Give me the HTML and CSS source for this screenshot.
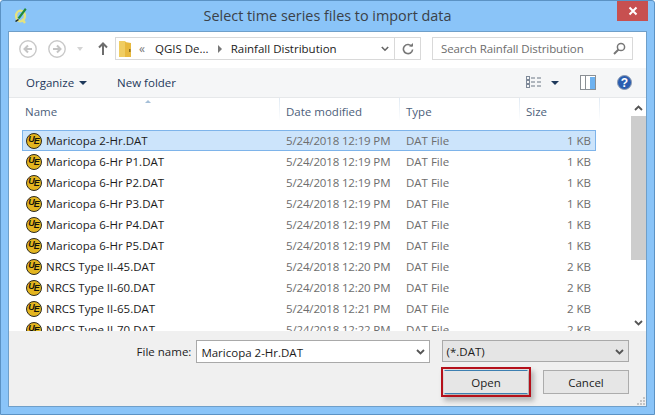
FILE: index.html
```html
<!DOCTYPE html>
<html lang="en">
<head>
    <meta charset="UTF-8">
    <title>Select time series files to import data</title>
    <link rel="stylesheet" href="styles.css">
</head>
<body>
    <div class="window">
        <div class="titlebar">
            <svg class="app-icon" width="16" height="20" viewBox="0 0 16 20">
                <ellipse cx="7.5" cy="10" rx="4.4" ry="5.4" fill="none" stroke="#e4e27e" stroke-width="2.4"/>
                <path d="M9 13l3 4" stroke="#e4e27e" stroke-width="2.4"/>
                <path d="M4.5 12L12 2l1.6 1.4L6.5 13z" fill="#1f8a3a"/>
                <path d="M2 15l3-2 1 1-3 2z" fill="#1d2a1d"/>
            </svg>
            <div class="title">Select time series files to import data</div>
            <div class="close">
                <svg width="10" height="10" viewBox="0 0 10 10"><path d="M1.5 1.5l7 7M8.5 1.5l-7 7" stroke="#fff" stroke-width="2"/></svg>
            </div>
        </div>

        <div class="inner">
            <div class="nav">
                <div class="round-btn"><svg width="18" height="18" viewBox="0 0 18 18"><circle cx="9" cy="9" r="8.2" fill="#fff" stroke="#c9c9c9" stroke-width="1.4"/><path d="M13 9H6M9 5.5L5.5 9 9 12.5" fill="none" stroke="#c4c4c4" stroke-width="2"/></svg></div>
                <div class="round-btn second"><svg width="18" height="18" viewBox="0 0 18 18"><circle cx="9" cy="9" r="8.2" fill="#fff" stroke="#c9c9c9" stroke-width="1.4"/><path d="M5 9h7M9 5.5L12.5 9 9 12.5" fill="none" stroke="#c4c4c4" stroke-width="2"/></svg></div>
                <div class="caret-light"></div>
                <svg class="up" width="10" height="13" viewBox="0 0 10 13"><path d="M5 13V2M1 5.5L5 1.5l4 4" fill="none" stroke="#6d6d6d" stroke-width="2"/></svg>
                <div class="address">
                    <svg class="folder" width="13" height="18" viewBox="0 0 13 18"><path d="M0 1h6l1 1v15H0z" fill="#f0cd62"/><path d="M6 2l6 1v14H6z" fill="#e8b93e"/><rect x="10" y="9" width="1.5" height="3" fill="#8a6d1c"/></svg>
                    <span class="chevrons">&#171;</span>
                    <span class="crumb">QGIS De...</span>
                    <span class="crumb-arrow"></span>
                    <span class="crumb">Rainfall Distribution</span>
                    <svg class="addr-down" width="8" height="6" viewBox="0 0 8 6"><path d="M.8 1l3.2 3.2L7.2 1" fill="none" stroke="#666" stroke-width="1.6"/></svg>
                    <div class="refresh"><svg width="12" height="12" viewBox="0 0 12 12"><path d="M9.8 3.4A4.6 4.6 0 1 0 10.6 6.5" fill="none" stroke="#777" stroke-width="1.6"/><path d="M7 3.6h4V0z" fill="#777"/></svg></div>
                </div>
                <div class="search">
                    <span>Search Rainfall Distribution</span>
                    <svg width="13" height="13" viewBox="0 0 13 13"><circle cx="8" cy="5" r="3.6" fill="none" stroke="#777" stroke-width="1.5"/><path d="M5.5 7.5L1 12" stroke="#777" stroke-width="2"/></svg>
                </div>
            </div>

            <div class="toolbar">
                <span class="tool">Organize</span>
                <span class="caret-dark organize-caret"></span>
                <span class="tool new-folder">New folder</span>
                <svg class="view-icon" width="15" height="13" viewBox="0 0 15 13">
                    <g fill="none" stroke="#7f8a99"><rect x=".5" y=".5" width="3" height="3"/><rect x=".5" y="4.5" width="3" height="3"/><rect x=".5" y="8.5" width="3" height="3"/></g>
                    <path d="M5 2h4M11 2h4M5 6h4M11 6h4M5 10h4M11 10h4" stroke="#6b7684"/>
                </svg>
                <span class="caret-dark view-caret"></span>
                <svg class="pane-icon" width="16" height="15" viewBox="0 0 16 15">
                    <rect x=".5" y=".5" width="15" height="14" fill="#fff" stroke="#8a8f94"/>
                    <path d="M5.5 1v13" stroke="#8a8f94"/>
                    <rect x="10" y="2" width="5" height="12" fill="#6db2f0"/>
                </svg>
                <svg class="help-icon" width="15" height="15" viewBox="0 0 15 15">
                    <circle cx="7.5" cy="7.5" r="7" fill="#2a5db0" stroke="#8d9bb0"/>
                    <text x="7.5" y="11.5" class="help-text">?</text>
                </svg>
            </div>

            <div class="browser">
                <div class="files">
                    <div class="header">
                        <span class="sort-caret"></span>
                        <div class="col-name">Name</div>
                        <div class="col-date">Date modified</div>
                        <div class="col-type">Type</div>
                        <div class="col-size">Size</div>
                    </div>
                    <div class="rows">
                        <div class="row selected"><span class="ue-icon"><i>U</i><b>E</b></span><span class="name">Maricopa 2-Hr.DAT</span><span class="date">5/24/2018 12:19 PM</span><span class="type">DAT File</span><span class="size">1 KB</span></div>
                        <div class="row"><span class="ue-icon"><i>U</i><b>E</b></span><span class="name">Maricopa 6-Hr P1.DAT</span><span class="date">5/24/2018 12:19 PM</span><span class="type">DAT File</span><span class="size">1 KB</span></div>
                        <div class="row"><span class="ue-icon"><i>U</i><b>E</b></span><span class="name">Maricopa 6-Hr P2.DAT</span><span class="date">5/24/2018 12:19 PM</span><span class="type">DAT File</span><span class="size">1 KB</span></div>
                        <div class="row"><span class="ue-icon"><i>U</i><b>E</b></span><span class="name">Maricopa 6-Hr P3.DAT</span><span class="date">5/24/2018 12:19 PM</span><span class="type">DAT File</span><span class="size">1 KB</span></div>
                        <div class="row"><span class="ue-icon"><i>U</i><b>E</b></span><span class="name">Maricopa 6-Hr P4.DAT</span><span class="date">5/24/2018 12:19 PM</span><span class="type">DAT File</span><span class="size">1 KB</span></div>
                        <div class="row"><span class="ue-icon"><i>U</i><b>E</b></span><span class="name">Maricopa 6-Hr P5.DAT</span><span class="date">5/24/2018 12:19 PM</span><span class="type">DAT File</span><span class="size">1 KB</span></div>
                        <div class="row"><span class="ue-icon"><i>U</i><b>E</b></span><span class="name">NRCS Type II-45.DAT</span><span class="date">5/24/2018 12:20 PM</span><span class="type">DAT File</span><span class="size">2 KB</span></div>
                        <div class="row"><span class="ue-icon"><i>U</i><b>E</b></span><span class="name">NRCS Type II-60.DAT</span><span class="date">5/24/2018 12:20 PM</span><span class="type">DAT File</span><span class="size">2 KB</span></div>
                        <div class="row"><span class="ue-icon"><i>U</i><b>E</b></span><span class="name">NRCS Type II-65.DAT</span><span class="date">5/24/2018 12:21 PM</span><span class="type">DAT File</span><span class="size">2 KB</span></div>
                        <div class="row"><span class="ue-icon"><i>U</i><b>E</b></span><span class="name">NRCS Type II-70.DAT</span><span class="date">5/24/2018 12:22 PM</span><span class="type">DAT File</span><span class="size">2 KB</span></div>
                    </div>
                </div>
                <div class="scrollbar">
                    <svg width="9" height="6" viewBox="0 0 9 6"><path d="M1 5l3.5-3.5L8 5" fill="none" stroke="#555" stroke-width="1.8"/></svg>
                    <div class="thumb"></div>
                    <svg width="9" height="6" viewBox="0 0 9 6"><path d="M1 1l3.5 3.5L8 1" fill="none" stroke="#555" stroke-width="1.8"/></svg>
                </div>
            </div>

            <div class="footer">
                <div class="file-line">
                    <label class="file-label">File name:</label>
                    <div class="combo file-input">Maricopa 2-Hr.DAT<svg width="9" height="6" viewBox="0 0 9 6"><path d="M1 1l3.5 3.5L8 1" fill="none" stroke="#555" stroke-width="1.8"/></svg></div>
                    <div class="combo filter">(*.DAT)<svg width="9" height="6" viewBox="0 0 9 6"><path d="M1 1l3.5 3.5L8 1" fill="none" stroke="#555" stroke-width="1.8"/></svg></div>
                </div>
                <div class="buttons">
                    <button class="btn open">Open</button>
                    <button class="btn cancel">Cancel</button>
                </div>
                <svg class="grip" width="8" height="8" viewBox="0 0 8 8"><path d="M6 0h2v2H6zM3 3h2v2H3zM6 3h2v2H6zM0 6h2v2H0zM3 6h2v2H3zM6 6h2v2H6z" fill="#c4c4c4"/></svg>
            </div>
        </div>
    </div>
</body>
</html>
```

FILE: styles.css
```css
* {
    box-sizing: border-box;
}
html, body {
    margin: 0;
    background: #fff;
}
body {
    font-family: "Open Sans", "Noto Sans", Arial, sans-serif;
    font-size: 11.5px;
    color: #1c1c1c;
}
.help-text {
    font-family: "Liberation Sans", sans-serif;
    font-size: 12px;
    font-weight: bold;
    fill: #fff;
    text-anchor: middle;
}
.window {
    width: 655px;
    height: 415px;
    display: flex;
    flex-direction: column;
    padding: 0 7px 7px 7px;
    background: #8ac4f8;
    border: 1px solid #5b92c4;
    border-radius: 3px 3px 0 0;
    overflow: hidden;
}
.titlebar {
    height: 30px;
    flex: none;
    display: flex;
    align-items: flex-start;
}
.app-icon {
    margin: 5px 0 0 5px;
    flex: none;
}
.title {
    flex: 1;
    padding: 5px 0 0 9px;
    text-align: center;
    font-size: 14.4px;
    color: #3a4148;
}
.close {
    width: 31px;
    height: 20px;
    flex: none;
    margin-right: -1px;
    display: flex;
    align-items: center;
    justify-content: center;
    background: #c75050;
}
.inner {
    flex: 1;
    min-height: 0;
    display: flex;
    flex-direction: column;
    background: #fff;
    border: 1px solid #6f9fc9;
}

/* nav row */
.nav {
    height: 36px;
    flex: none;
    display: flex;
    align-items: center;
    padding: 0 12px 3px 10px;
}
.round-btn {
    width: 18px;
    height: 18px;
}
.round-btn.second {
    margin-left: 11px;
}
.caret-light {
    margin-left: 11px;
    border: 3.5px solid transparent;
    border-top: 4px solid #d4d4d4;
    border-bottom: 0;
}
.up {
    margin-left: 15px;
}
.address {
    width: 306px;
    height: 23px;
    margin-left: 7px;
    display: flex;
    align-items: center;
    border: 1px solid #d9d9d9;
    padding-left: 3px;
    font-size: 11.5px;
}
.chevrons {
    margin-left: 7px;
    color: #777;
    font-size: 12px;
}
.crumb {
    margin-left: 10px;
    color: #222;
    white-space: nowrap;
}
.crumb-arrow {
    margin-left: 9px;
    margin-right: -1px;
    border: 4px solid transparent;
    border-left: 4px solid #777;
    border-right: 0;
}
.addr-down {
    margin-left: auto;
    margin-right: 5px;
}
.refresh {
    width: 26px;
    height: 21px;
    display: flex;
    align-items: center;
    justify-content: center;
    border-left: 1px solid #d9d9d9;
}
.search {
    width: 201px;
    height: 23px;
    margin-left: 11px;
    display: flex;
    align-items: center;
    justify-content: space-between;
    padding: 0 6px 0 8px;
    border: 1px solid #d9d9d9;
    color: #6d6d6d;
    letter-spacing: -0.1px;
}

/* command bar */
.toolbar {
    height: 30px;
    flex: none;
    display: flex;
    align-items: center;
    padding-left: 17px;
    background: #f5f6f7;
    border-bottom: 1px solid #e6e8ea;
    color: #1e395b;
}
.caret-dark {
    border: 4px solid transparent;
    border-top: 4px solid #1e395b;
    border-bottom: 0;
}
.organize-caret {
    margin-left: 5px;
}
.new-folder {
    margin-left: 30px;
}
.view-icon {
    margin-left: auto;
}
.view-caret {
    margin-left: 10px;
}
.pane-icon {
    margin-left: 21px;
}
.help-icon {
    margin: 0 14px 0 21px;
}

/* file list */
.browser {
    height: 233px;
    flex: none;
    display: flex;
    overflow: hidden;
}
.files {
    flex: 1;
    min-width: 0;
}
.header {
    height: 22px;
    position: relative;
    display: grid;
    grid-template-columns: 271px 120px 120px 80px;
    color: #4c607a;
}
.header div {
    padding: 6px 0 0 6px;
    border-right: 1px solid;
    border-image: linear-gradient(#dfe9f3, #fff) 1;
}
.header .col-name {
    padding-left: 16px;
}
.sort-caret {
    position: absolute;
    left: 136px;
    top: 2px;
    border: 3.5px solid transparent;
    border-bottom: 3px solid #a5bfd8;
    border-top: 0;
}
.rows {
    padding: 10px 0 0 13px;
}
.row {
    width: 574px;
    height: 21px;
    display: grid;
    grid-template-columns: 20px 240px 120px 120px 65px;
    align-items: center;
    padding-left: 3px;
    color: #6d6d6d;
    border: 1px solid transparent;
}
.row.selected {
    background: #cce4fb;
    border-color: #7eb4ea;
}
.row .name {
    color: #1c1c1c;
    white-space: nowrap;
}
.row .date {
    letter-spacing: -0.15px;
}
.row .size {
    text-align: right;
}
.ue-icon {
    width: 16px;
    height: 16px;
    display: flex;
    align-items: center;
    justify-content: center;
    border: 1.5px solid #2b2a22;
    border-radius: 50%;
    background: #e3b51f;
    font-family: "Liberation Sans", sans-serif;
    font-size: 9px;
    line-height: 1;
    color: #14120a;
}
.ue-icon i, .ue-icon b {
    font-style: italic;
    font-weight: bold;
}
.ue-icon i {
    transform: translateY(-1px);
}
.ue-icon b {
    margin-left: -1px;
    transform: translateY(1px);
}
.scrollbar {
    width: 15px;
    flex: none;
    display: flex;
    flex-direction: column;
    align-items: center;
    justify-content: space-between;
    padding: 7px 0 5px;
}
.thumb {
    width: 15px;
    height: 144px;
    margin-top: 5px;
    margin-bottom: auto;
    background: #cdcdcd;
}

/* bottom panel */
.footer {
    flex: 1;
    min-height: 0;
    position: relative;
    padding: 9px 17px 0 0;
    background: #f0f0f0;
}
.file-line {
    display: flex;
    align-items: flex-start;
}
.file-label {
    width: 182px;
    padding: 4px 0 0 0;
    text-align: right;
    transform: translateX(1px);
}
.combo {
    height: 23px;
    display: flex;
    align-items: center;
    justify-content: space-between;
    padding: 1px 4px 0 4px;
    border: 1px solid #a9a9a9;
}
.combo svg {
    flex: none;
}
.file-input {
    width: 234px;
    margin-left: 6px;
    background: #fff;
}
.filter {
    width: 188px;
    margin-left: 12px;
    height: 22px;
    background: #e5e5e5;
}
.buttons {
    display: flex;
    justify-content: flex-end;
    gap: 15px;
    margin-top: 7px;
}
.btn {
    width: 86px;
    height: 24px;
    padding: 0;
    font: inherit;
    color: #1c1c1c;
    background: #e6e6e6;
    border: 1px solid #acacac;
}
.open {
    width: 84px;
    border-color: #3c7fb1;
    border-left-color: #e6e6e6;
    border-right-color: #e6e6e6;
    outline: 2px solid #b5101a;
    outline-offset: 1px;
    box-shadow: 3px 4px 5px 3px #b4b4b4;
}
.grip {
    position: absolute;
    right: 1px;
    bottom: 1px;
}
```
